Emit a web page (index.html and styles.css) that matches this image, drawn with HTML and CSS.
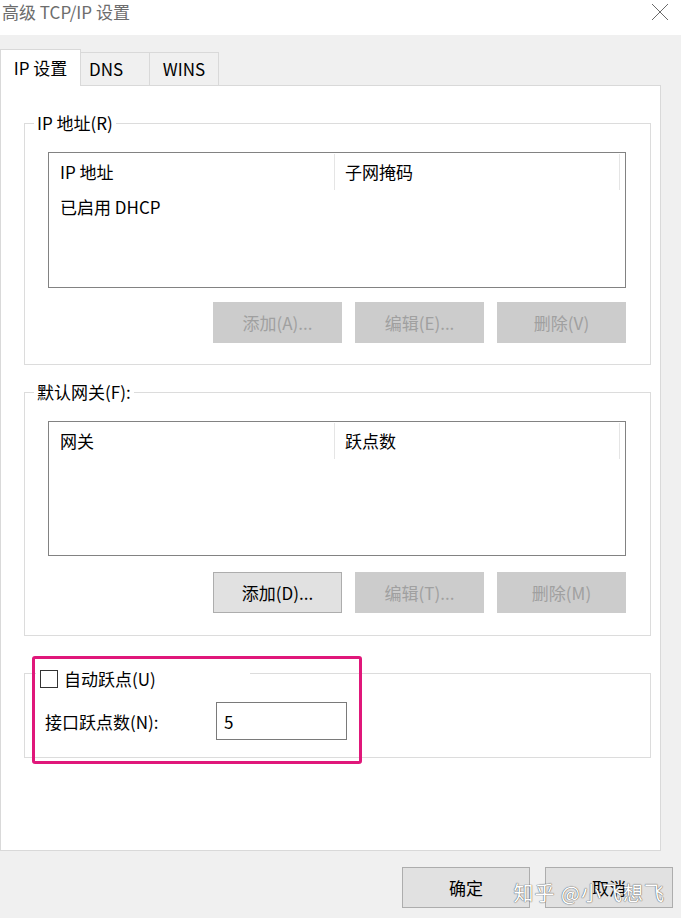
FILE: index.html
```html
<!DOCTYPE html>
<html lang="zh-CN">
<head>
    <meta charset="UTF-8">
    <meta name="viewport" content="width=device-width, initial-scale=1.0">
    <title>高级 TCP/IP 设置</title>
    <link rel="stylesheet" href="styles.css">
</head>
<body>

    <div class="titlebar">
        <span class="title">高级 TCP/IP 设置</span>
        <svg class="close" width="18" height="18" viewBox="0 0 18 18">
            <path d="M1 1 L17 17 M17 1 L1 17" stroke="#6a6a6a" stroke-width="1" fill="none"/>
        </svg>
    </div>

    <div class="tabs">
        <div class="tab active">IP 设置</div>
        <div class="tab tab-dns">DNS</div>
        <div class="tab">WINS</div>
    </div>

    <div class="panel">
        <fieldset class="group">
            <legend>IP 地址(R)</legend>
            <div class="listview">
                <div class="lv-head">
                    <span class="col col-a">IP 地址</span>
                    <span class="col col-b">子网掩码</span>
                </div>
                <div class="lv-row">已启用 DHCP</div>
            </div>
            <div class="btn-row">
                <button class="btn" disabled>添加(A)...</button>
                <button class="btn" disabled>编辑(E)...</button>
                <button class="btn" disabled>删除(V)</button>
            </div>
        </fieldset>

        <fieldset class="group group-gw">
            <legend>默认网关(F):</legend>
            <div class="listview">
                <div class="lv-head">
                    <span class="col col-a">网关</span>
                    <span class="col col-b">跃点数</span>
                </div>
            </div>
            <div class="btn-row">
                <button class="btn">添加(D)...</button>
                <button class="btn" disabled>编辑(T)...</button>
                <button class="btn" disabled>删除(M)</button>
            </div>
        </fieldset>

        <div class="hop-wrap">
            <fieldset class="group group-hop">
                <legend class="check-legend">
                    <span class="checkbox"></span>
                    <span>自动跃点(U)</span>
                </legend>
                <div class="hop-row">
                    <label for="hops">接口跃点数(N):</label>
                    <input id="hops" class="hop-input" type="text" value="5">
                </div>
            </fieldset>
            <div class="highlight"></div>
        </div>
    </div>

    <div class="footer">
        <button class="btn btn-main">确定</button>
        <button class="btn btn-main">取消</button>
        <span class="watermark">知乎 @小飞想飞</span>
    </div>

</body>
</html>
```

FILE: styles.css
```css
body {
    margin: 0;
    padding: 0;
    background-color: #f0f0f0;
    font-family: "Noto Sans CJK SC", "Microsoft YaHei", sans-serif;
    font-size: 17px;
    color: #000;
    width: 681px;
    height: 918px;
    overflow: hidden;
}

.titlebar {
    height: 35px;
    background-color: #fff;
    display: flex;
    justify-content: space-between;
    align-items: flex-start;
    padding: 0 12px 0 2px;
    box-sizing: border-box;
}

.title {
    line-height: 24px;
    color: #6d6d6d;
}

.close {
    margin-top: 3px;
}

.tabs {
    display: flex;
    align-items: flex-end;
    height: 50px;
    box-sizing: border-box;
    padding-top: 14px;
}

.tab {
    height: 33px;
    line-height: 32px;
    text-align: center;
    width: 69px;
    border: 1px solid #d9d9d9;
    border-left: none;
    border-bottom: none;
    box-sizing: border-box;
    background-color: #f0f0f0;
}

.tab-dns {
    text-align: left;
    padding-left: 8px;
}

.tab.active {
    width: 81px;
    height: 37px;
    line-height: 35px;
    background-color: #fff;
    border-left: 1px solid #d9d9d9;
    margin-bottom: -1px;
    position: relative;
    z-index: 1;
}

.panel {
    width: 661px;
    height: 766px;
    box-sizing: border-box;
    background-color: #fff;
    border: 1px solid #d9d9d9;
    padding: 26px 9px 0 23px;
}

.group {
    margin: 0;
    padding: 0 24px 21px 23px;
    border: 1px solid #dcdcdc;
    min-inline-size: 0;
}

.group legend {
    margin-left: -14px;
    padding: 0 3px;
    line-height: 22px;
}

.group-gw {
    margin-top: 16px;
    padding-bottom: 22px;
}

.listview {
    margin-top: 18px;
    height: 136px;
    box-sizing: border-box;
    border: 1px solid #828282;
}

.group-gw .listview {
    height: 135px;
}

.lv-head {
    display: flex;
    height: 38px;
    align-items: center;
}

.col {
    padding-left: 11px;
    height: 36px;
    line-height: 36px;
    box-sizing: border-box;
    border-right: 1px solid #e5e5e5;
}

.col-a {
    width: 286px;
}

.col-b {
    width: 285px;
    padding-left: 10px;
}

.lv-row {
    padding-left: 11px;
    line-height: 32px;
}

.btn-row {
    display: flex;
    justify-content: flex-end;
    gap: 13px;
    margin-top: 14px;
}

.group-gw .btn-row {
    margin-top: 16px;
}

.btn {
    width: 129px;
    height: 41px;
    font-family: inherit;
    font-size: 17px;
    color: #000;
    background-color: #e1e1e1;
    border: 1px solid #adadad;
    padding: 0;
}

.btn:disabled {
    background-color: #cccccc;
    border-color: #cccccc;
    color: #a0a0a0;
}

.hop-wrap {
    position: relative;
    margin-top: 20px;
}

.group-hop {
    padding: 0 20px 17px 20px;
}

.group .check-legend {
    margin-left: -9px;
    width: 214px;
    box-sizing: border-box;
    padding: 12px 0 0 4px;
    display: flex;
    align-items: center;
    gap: 6px;
}

.checkbox {
    width: 18px;
    height: 18px;
    box-sizing: border-box;
    border: 1px solid #333;
    background-color: #fff;
}

.hop-row {
    display: flex;
    align-items: center;
    margin-top: 12px;
}

.hop-row label {
    width: 171px;
}

.hop-input {
    width: 131px;
    height: 38px;
    box-sizing: border-box;
    border: 1px solid #7a7a7a;
    padding: 0 0 0 7px;
    font-family: inherit;
    font-size: 17px;
    color: #000;
}

.highlight {
    position: absolute;
    left: 8px;
    top: 0;
    width: 330px;
    height: 108px;
    box-sizing: border-box;
    border: 3px solid #e0177a;
    border-radius: 3px;
}

.footer {
    position: relative;
    display: flex;
    justify-content: flex-end;
    gap: 15px;
    padding: 16px 8px 0 0;
}

.btn-main {
    width: 128px;
}

.watermark {
    position: absolute;
    right: 16px;
    top: 27px;
    font-size: 20px;
    color: #fff;
    text-shadow: 0 0 1px #555, 0 0 1px #555;
    letter-spacing: 1px;
}
```
